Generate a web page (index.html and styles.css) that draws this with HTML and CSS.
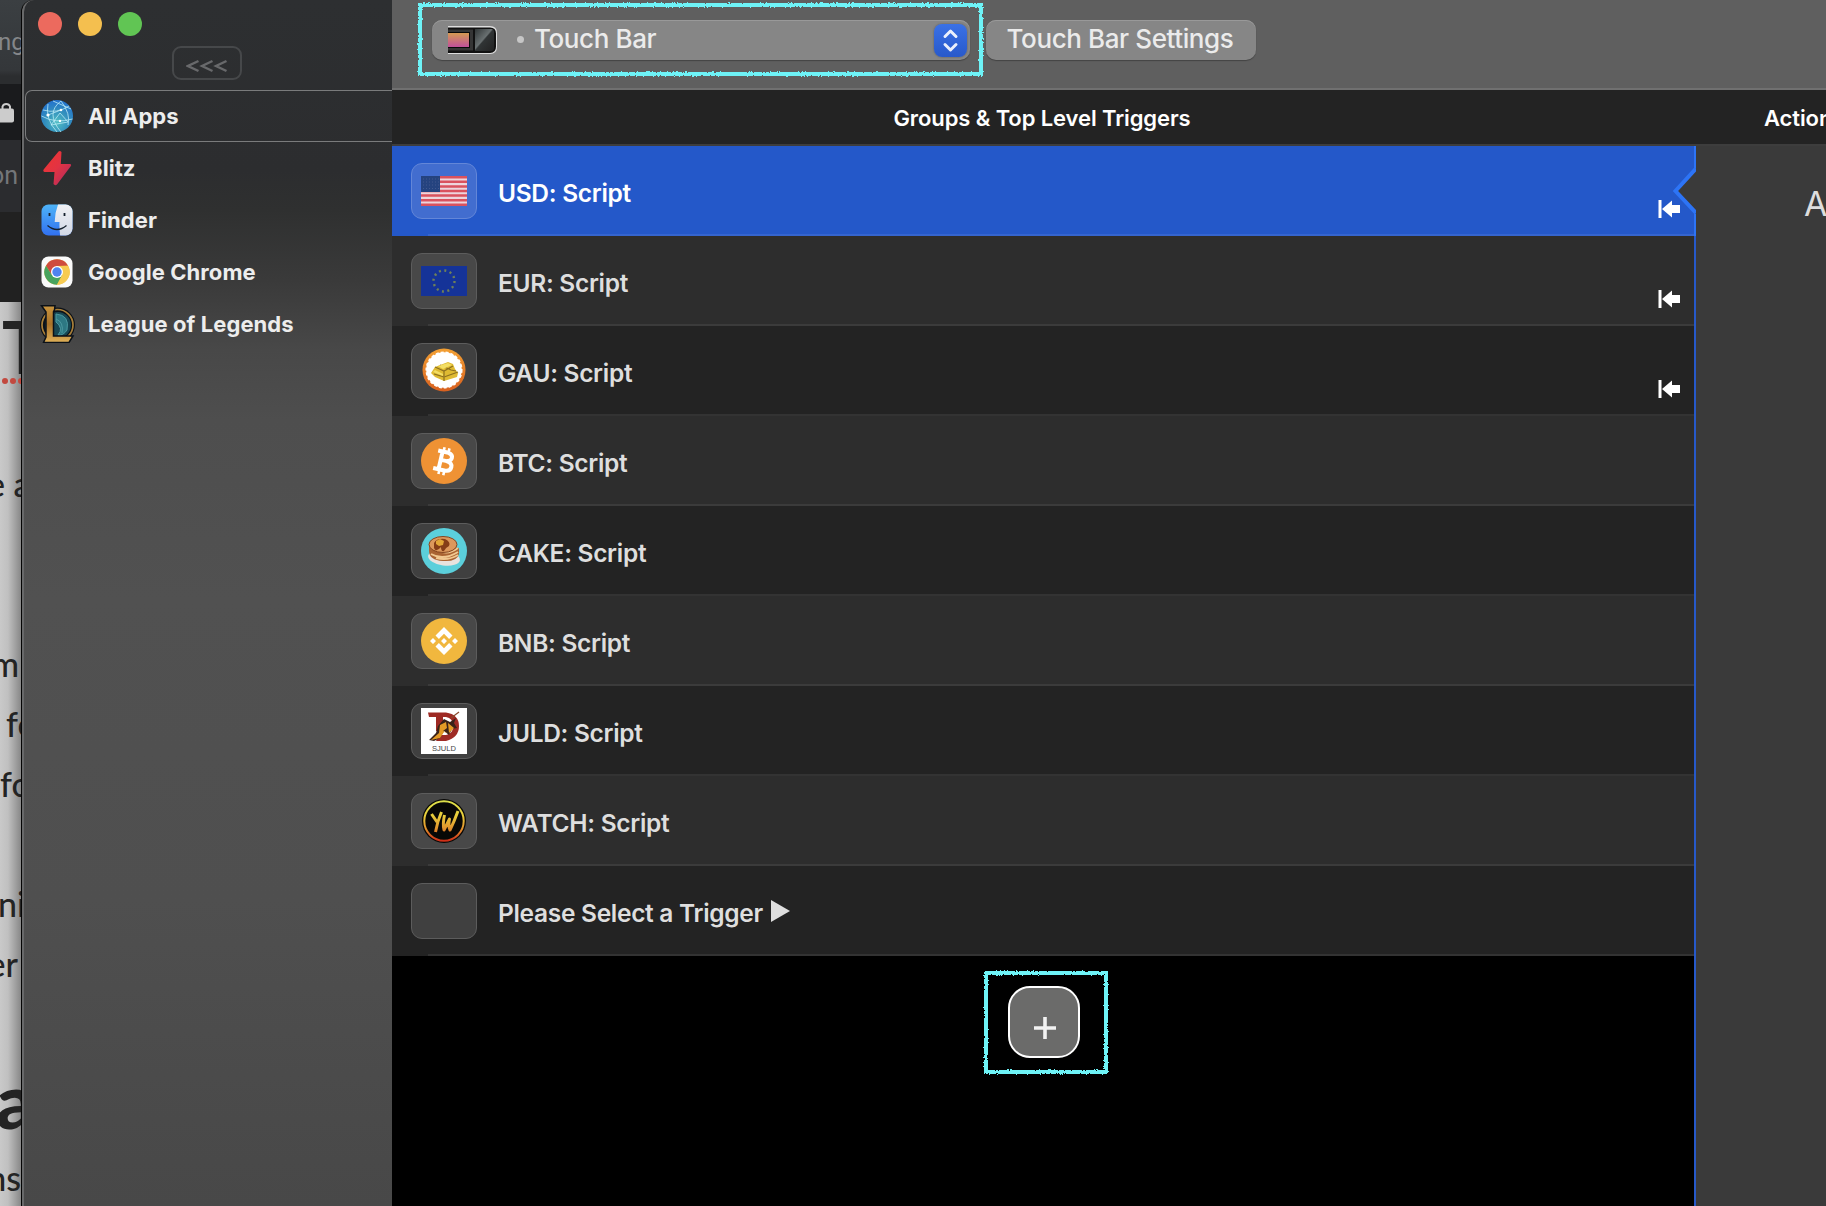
FILE: index.html
```html
<!DOCTYPE html>
<html lang="en">
<head>
<meta charset="utf-8">
<title>Touch Bar triggers</title>
<link rel="stylesheet" href="styles.css">
</head>
<body>
<div class="desktop">
  <div class="browser">
    <div class="tabstrip">ng</div>
    <div class="urlbar"><svg width="16" height="24" viewBox="0 0 16 24"><path d="M2.500 10V6.500a4 4 0 0 1 7.500 0V10" fill="none" stroke="#ccc" stroke-width="2"/><rect x="-3" y="8.500" width="17" height="14" rx="2" fill="#ccc"/></svg></div>
    <div class="bookmarks">on</div>
    <div class="pagedark"></div>
    <div class="page">
      <div class="title">T</div>
      <svg class="dots" width="21" height="8"><g fill="#c2493f"><circle cx="5" cy="4" r="3"/><circle cx="13" cy="4" r="3"/><circle cx="21" cy="4" r="3"/></g></svg>
      <div class="line l1"><span>e a</span></div>
      <div class="line l2 end"><span>m</span></div>
      <div class="line l3"><span>fo</span></div>
      <div class="line l4"><span>fo</span></div>
      <div class="line l5"><span>ni</span></div>
      <div class="line l6 end"><span>er</span></div>
      <div class="title t2">a</div>
      <div class="line l7 end"><span>ns</span></div>
    </div>
  </div>

  <div class="window">
    <aside class="sidebar">
      <div class="lights"><i class="red"></i><i class="yellow"></i><i class="green"></i></div>
      <div class="collapse"><svg width="42" height="14" viewBox="0 0 42 14" fill="none" stroke="#68696b" stroke-width="2.400"><path d="M12.500 2 2 7l10.500 5M26.500 2 16 7l10.500 5M40.500 2 30 7l10.500 5"/></svg></div>
      <ul class="apps">
        <li class="current">
          <svg viewBox="0 0 36 36"><defs><radialGradient id="globe" cx=".5" cy=".7" r=".7"><stop offset="0" stop-color="#52bfc4"/><stop offset=".55" stop-color="#318dbd"/><stop offset="1" stop-color="#2472cf"/></radialGradient></defs><circle cx="18" cy="18" r="16" fill="url(#globe)"/><g fill="none" stroke="#bfeef8" stroke-width=".9" opacity=".85"><path d="M4 12q14 4 26-4M9 6q-3 15 9 28M22 3q-16 12 0 31M22 3q10 13 7 24M2.500 18q14 8 31 3M9 17 22 12M21 15l-9 12 17-3zM14 3l18 8"/></g><circle cx="9" cy="17" r="1.600" fill="#fff"/><circle cx="22" cy="12" r="1.300" fill="#fff"/><circle cx="21" cy="23" r="1.200" fill="#fff"/></svg>
          <span>All Apps</span></li>
        <li>
          <svg viewBox="0 0 36 36"><defs><linearGradient id="bolt" x1="0" y1="0" x2="1" y2="1"><stop offset="0" stop-color="#f0352f"/><stop offset=".5" stop-color="#e23343"/><stop offset="1" stop-color="#a92a63"/></linearGradient></defs><path d="M19.500 1.500q1.500-1 3 .5l-.7 12H31q2 .5.500 2.500L18 34.500q-2 1.500-3.500-.5L15.500 22H5.500q-2-.8-.7-2.700z" fill="url(#bolt)"/></svg>
          <span>Blitz</span></li>
        <li>
          <svg viewBox="0 0 36 36"><defs><linearGradient id="fb" x1="0" y1="0" x2="0" y2="1"><stop offset="0" stop-color="#50b9f8"/><stop offset="1" stop-color="#2f6bf0"/></linearGradient><linearGradient id="fw" x1="0" y1="0" x2="0" y2="1"><stop offset="0" stop-color="#f3f3f5"/><stop offset="1" stop-color="#cfd6e4"/></linearGradient><clipPath id="fc"><rect x="2.500" y="2.500" width="31" height="31" rx="7"/></clipPath></defs><g clip-path="url(#fc)"><path d="M0 0h36v36H0z" fill="url(#fb)"/><path d="M20 0q-4 9-4.300 20h4.800q-.3 8 1 16H36V0z" fill="url(#fw)"/></g><path d="M10.500 11v3M25.500 11v3" stroke="#15202c" stroke-width="1.800"/><path d="M8.500 23.500q9.500 8 19 0" fill="none" stroke="#15202c" stroke-width="1.300"/></svg>
          <span>Finder</span></li>
        <li>
          <svg viewBox="0 0 36 36"><rect x="2.500" y="2.500" width="31" height="31" rx="7" fill="#fafafa"/><g transform="translate(18 18)"><circle r="12.700" fill="#e9ba42"/><path d="M-11-6.350A12.700 12.700 0 0 1 11-6.350L0-6-5.200 3z" fill="#cf4b3e"/><path d="M-11-6.350A12.700 12.700 0 0 0 0 12.700L5.200 3-5.200 3z" fill="#47a35d"/><path d="M11-6.350A12.700 12.700 0 0 1 0 12.700L5.200 3 0-6z" fill="#f7cb52"/><circle r="6" fill="#fff"/><circle r="4.700" fill="#4f83ee"/></g></svg>
          <span>Google Chrome</span></li>
        <li>
          <svg class="lol" viewBox="0 0 36 38"><defs><linearGradient id="gold" x1="0" y1="0" x2="0" y2="1"><stop offset="0" stop-color="#c9953e"/><stop offset=".5" stop-color="#a87229"/><stop offset="1" stop-color="#dfb058"/></linearGradient></defs><circle cx="18.500" cy="20" r="17.500" fill="#0b1118"/><circle cx="18.500" cy="20" r="15.500" fill="none" stroke="#a87f39" stroke-width="1.700"/><circle cx="19" cy="20" r="13" fill="#174753"/><path d="M17 9q14 1 11 16-4 6-9 5 6-7-2-13zM17 14q8 3 6 14" fill="#2d7883" stroke="#4b98a0" stroke-width="1"/><path d="M2.500.8H16l-.5 4-1 2V31H34l-4 6.500H4.500L7 32V7Z" fill="url(#gold)" stroke="#0b1118" stroke-width="1.500"/></svg>
          <span>League of Legends</span></li>
      </ul>
    </aside>

    <main class="main">
      <div class="toolbar">
        <div class="select">
          <svg class="tb" width="50" height="32" viewBox="0 0 50 32"><defs><linearGradient id="sun" x1="0" y1="0" x2="0" y2="1"><stop offset="0" stop-color="#d59a52"/><stop offset="1" stop-color="#c1509a"/></linearGradient><linearGradient id="glass" x1="0" y1="0" x2="1" y2="1"><stop offset="0" stop-color="#303536"/><stop offset=".45" stop-color="#697071"/><stop offset=".5" stop-color="#303435"/><stop offset="1" stop-color="#222"/></linearGradient></defs><path d="M0 2h42q7 0 7 7v14q0 7-7 7H0z" fill="#dedede"/><path d="M0 3.500h42q6 0 6 6v13q0 6.500-6 6.500H0z" fill="#111"/><path d="M0 5.500h25v21H0z" fill="#353535"/><path d="M0 8h22v16H0z" fill="#090909"/><path d="M0 9h21v14H0z" fill="url(#sun)"/><path d="M27 5h16q3 0 3 3v16q0 3-3 3H27z" fill="url(#glass)"/></svg>
          <span class="bullet"></span>
          <span class="label">Touch Bar</span>
          <span class="stepper"><svg width="33" height="33" viewBox="0 0 33 33" fill="none" stroke="#fff" stroke-opacity=".9" stroke-width="3" stroke-linecap="round" stroke-linejoin="round"><path d="m11 12.500 5.500-5.500 5.500 5.500M11 20.500l5.500 5.500 5.500-5.500"/></svg></span>
        </div>
        <div class="button">Touch Bar Settings</div>
      </div>
      <div class="heads"><div class="head-groups"><span>Groups &amp; Top Level Triggers</span></div><div class="head-actions">Actions</div></div>
      <div class="content">
        <div class="triggers">
          <div class="row selected"><div class="thumb"><svg viewBox="0 0 46 46"><path d="M0 8h46v30H0z" fill="#edd5dc"/><path d="M0 9.200h46M0 13.800h46M0 18.400h46M0 23h46M0 27.600h46M0 32.200h46M0 36.800h46" stroke="#d9525e" stroke-width="2.500"/><path d="M0 8h19v16H0z" fill="#25437f"/><path d="M2 11h16M2 14h16M2 17h16M2 20.500h16" stroke="#42598f" stroke-width="1" stroke-dasharray="1 2"/></svg></div><span class="name">USD: Script</span><svg class="back" viewBox="0 0 22 18"><path d="M.5 0h3v18h-3zM4 9 14 .5V5h8v8h-8v4.500z" fill="#fff"/></svg></div>
          <div class="row"><div class="thumb"><svg viewBox="0 0 46 46"><path d="M0 8h46v30H0z" fill="#153398"/><circle cx="23" cy="23" r="10.500" fill="none" stroke="#6f8058" stroke-width="2.400" stroke-dasharray="2 3.500"/></svg></div><span class="name">EUR: Script</span><svg class="back" viewBox="0 0 22 18"><path d="M.5 0h3v18h-3zM4 9 14 .5V5h8v8h-8v4.500z" fill="#fff"/></svg></div>
          <div class="row"><div class="thumb"><svg viewBox="0 0 46 46"><defs><linearGradient id="ring" x1="0" y1="0" x2="0" y2="1"><stop offset="0" stop-color="#f3a033"/><stop offset="1" stop-color="#d8601f"/></linearGradient></defs><circle cx="23" cy="22" r="21.500" fill="url(#ring)"/><circle cx="23" cy="22" r="17.800" fill="#fff" stroke="#fff" stroke-width="1.500" stroke-dasharray="3 2"/><path d="m10 25 4-6 13-5 5 2 2 5 3 4-1 4-13 4-9-4z" fill="#dfba32"/><path d="m14 19 9 4 9-5M19 17l11 5 5 1M13 26l10 3v4M23 29l14-5M23 23v5" stroke="#8d701f" fill="none" stroke-width="1.200"/><path d="m17 18 10-3 4 2-9 4zM14 22l8 4v2l-10-4z" fill="#f3de65"/></svg></div><span class="name">GAU: Script</span><svg class="back" viewBox="0 0 22 18"><path d="M.5 0h3v18h-3zM4 9 14 .5V5h8v8h-8v4.500z" fill="#fff"/></svg></div>
          <div class="row"><div class="thumb"><svg viewBox="0 0 46 46"><circle cx="23" cy="23" r="23" fill="#ef9234"/><g transform="rotate(13 23 23)" fill="none" stroke="#fff"><path d="M15 14h10.500q4.500.5 4.500 4.200t-4.500 4.300H19M25.500 22.500q6 .5 6 4.700 0 5-6 5H14M19.500 14v18" stroke-width="4"/><path d="M20.500 9.500V14M25.500 9.500V14M20.500 32v5M25.500 32v5" stroke-width="2.600"/></g></svg></div><span class="name">BTC: Script</span></div>
          <div class="row"><div class="thumb"><svg viewBox="0 0 46 46"><circle cx="23" cy="23" r="23" fill="#5bcfdb"/><ellipse cx="23" cy="30" rx="16" ry="7.500" fill="#e8e2de" transform="rotate(8 23 30)"/><path d="M8 23q0 9 14 10t16-7v-6l-30-4z" fill="#a96332"/><path d="M10 26q12 7 27-2M15 30q12 3 22-3M17 22q9 6 20-2" fill="none" stroke="#f1c891" stroke-width="2"/><ellipse cx="22" cy="16.500" rx="14" ry="8" fill="#dc985c" stroke="#85451f" stroke-width="1"/><path d="M13 15q3-5 11-4 6 3 4 7-4 2-5 5-3 1-3-4-5 6-7 1z" fill="#853d17"/><path d="m15 13 4-2 4 2-1 4-4 1-3-2z" fill="#e2a638"/></svg></div><span class="name">CAKE: Script</span></div>
          <div class="row"><div class="thumb"><svg viewBox="0 0 46 46"><circle cx="23" cy="23" r="23" fill="#f1b73e"/><path d="m23 9 8.500 8.500-3.400 3.400-5.100-5.100-5.100 5.100-3.400-3.400zM23 37l8.500-8.500-3.400-3.400-5.100 5.100-5.100-5.100-3.400 3.400zM12 20l3 3-3 3-3-3zM34 20l3 3-3 3-3-3zM23 20l3 3-3 3-3-3z" fill="#fff"/></svg></div><span class="name">BNB: Script</span></div>
          <div class="row"><div class="thumb"><svg viewBox="0 0 46 46"><path d="M0 0h46v46H0z" fill="#fff"/><path d="M7 4.500h18q13 2 13 13.500T25 33H15l3-6h7q7-1 7-9t-7-9h-3v14h-7V9H8z" fill="#9e2a24"/><path d="m30 10 8-6" stroke="#8a4a2c" stroke-width="1.200"/><path d="M8 32l7-7 2-7 6-7 6 3 6-4-2 5 3 5-5 1-3 6-5-4-4 7-6 3z" fill="#3a2219"/><path d="m10 32 8-7 1-8 6-3 1 6-4 3 5 2-4-1-4 6zM27 15l6 5-5 5z" fill="#e39a26"/><text x="23" y="42.500" text-anchor="middle" class="juld" textLength="24" lengthAdjust="spacingAndGlyphs">SJULD</text></svg></div><span class="name">JULD: Script</span></div>
          <div class="row"><div class="thumb"><svg viewBox="0 0 46 46"><defs><linearGradient id="yw" gradientUnits="userSpaceOnUse" x1="0" y1="3" x2="0" y2="43"><stop offset="0" stop-color="#dde04a"/><stop offset=".35" stop-color="#e8cf3c"/><stop offset=".7" stop-color="#e0902c"/><stop offset="1" stop-color="#cf2c17"/></linearGradient></defs><circle cx="23" cy="23" r="22" fill="#080806"/><circle cx="23" cy="23" r="19.700" fill="none" stroke="url(#yw)" stroke-width="2"/><path d="m10.500 16 5.500 8M20.500 14q-4 9-6 20M23.500 17q-2 9-.5 15l5.500-11q-1.500 7 .5 11 4-8 8-19" fill="none" stroke="url(#yw)" stroke-width="3" stroke-linejoin="round"/></svg></div><span class="name">WATCH: Script</span></div>
          <div class="row"><div class="thumb"></div><span class="name">Please Select a Trigger</span><svg class="play" viewBox="0 0 19 22"><path d="m0 0 19 11L0 22z" fill="#dedede"/></svg></div>
          <div class="empty"><button class="add"><svg width="30" height="30" viewBox="0 0 30 30"><path d="M15 4v22M4 15h22" stroke="#f2f2f2" stroke-width="3.600"/></svg></button></div>
          <svg class="notch" viewBox="0 0 24 50"><path d="M24 2 3 25l21 23z" fill="#3a3a3a"/><path d="M24 2.500 3.500 25 24 47" fill="none" stroke="#2d74f6" stroke-width="4"/></svg>
        </div>
        <div class="actions">A</div>
      </div>
    </main>
  </div>

  <svg class="marks" width="1826" height="1206"><defs><filter id="rough" filterUnits="userSpaceOnUse" x="400" y="0" width="750" height="1100"><feTurbulence type="fractalNoise" baseFrequency=".55" numOctaves="2" seed="4"/><feDisplacementMap in="SourceGraphic" scale="3" xChannelSelector="R" yChannelSelector="G"/></filter></defs><g fill="none" stroke="#6ef3f7" stroke-width="4" filter="url(#rough)"><rect x="420" y="5" width="561" height="69"/><rect x="986" y="973" width="120" height="99"/></g></svg>
</div>
</body>
</html>
```
FILE: styles.css
```css
* { box-sizing: border-box; }
body { margin: 0; background: #000; font-family: Inter, "Liberation Sans", sans-serif; }
.desktop { position: relative; display: flex; width: 1826px; height: 1206px; overflow: hidden; }

/* browser window that shows behind the left edge */
.browser { width: 31px; margin-right: -10px; flex: none; height: 1206px; overflow: hidden; white-space: nowrap; background: #111; }
.tabstrip { height: 84px; background: linear-gradient(#3b3f42, #34373a 70px, #2b2d2f 76px); color: #85878a; font: 24px/84px Roboto, sans-serif; text-indent: -2px; }
.urlbar { height: 56px; background: #1a1b1d; padding-top: 16px; }
.bookmarks { height: 72px; background: #2b2c2f; color: #747679; font: 25px/72px Roboto, sans-serif; text-indent: -10px; }
.pagedark { height: 90px; background: #212121; }
.page { height: 904px; display: flex; flex-direction: column; background: linear-gradient(90deg, #c9c9c9, #c0c0c0 8px, #888 21px); color: #242424; padding-top: 4px; }
.title { height: 71px; flex: none; font: 700 72px/80px Lato, sans-serif; padding-left: 2px; }
.dots { display: block; flex: none; }
.line { height: 60px; font: 500 34px/60px Lato, sans-serif; display: flex; white-space: pre; flex: none; }
.end { justify-content: flex-end; }
.l1 { margin-top: 69px; }
.l1 span { margin-left: -13px; }
.l2 { margin-top: 120px; padding-right: 12px; }
.l3 { padding-left: 6px; }
.l4 { padding-left: 0; }
.l5 { margin-top: 60px; }
.l5 span { margin-left: -2px; }
.l6 { padding-right: 13px; }
.t2 { margin-top: 66px; height: 80px; font-weight: 900; font-size: 76px; padding-left: 0; text-indent: -4px; }
.l7 { margin-top: 8px; padding-right: 10px; }

/* app window */
.window { position: relative; flex: none; width: 1805px; height: 1206px; display: flex; overflow: hidden; border-left: 1px solid #050505; border-top-left-radius: 12px; background: #4e4e4e; }
.sidebar { width: 370px; flex: none; border-left: 2px solid #68696a; border-top-left-radius: 12px; background: linear-gradient(#2d2f31, #2c2d2f 170px, #2f3030 210px, #3a3a3a 280px, #484848 350px, #4e4e4e 420px, #515151 600px, #4f4f4f 900px, #484848); }
.lights { display: flex; gap: 16px; padding: 12px 0 0 14px; }
.lights i { width: 24px; height: 24px; border-radius: 50%; }
.red { background: #ec6a5e; }
.yellow { background: #f4bf4f; }
.green { background: #61c554; }
.collapse { margin: 10px 0 0 148px; width: 70px; height: 34px; border: 2px solid #46484a; border-radius: 9px; display: flex; justify-content: center; align-items: center; padding-top: 5px; }
.apps { list-style: none; margin: 10px 0 0 1px; padding: 0; }
.apps li { height: 52px; padding-left: 13px; display: flex; align-items: center; gap: 13px; color: #ededed; font-size: 22px; font-weight: 700; letter-spacing: .08px; white-space: nowrap; border: 1px solid transparent; border-right: 0; }
.apps .current { border-color: #7a7b7c; border-radius: 7px 0 0 7px; }
.apps svg { width: 36px; height: 36px; flex: none; }
.apps .lol { height: 38px; }

.main { width: 1434px; flex: none; display: flex; flex-direction: column; }
.toolbar { height: 90px; flex: none; background: #5f5f5f; border-bottom: 2px solid #707070; padding: 20px 0 0 40px; display: flex; gap: 16px; }
.select, .button { height: 40px; border-radius: 10px; background: #868686; box-shadow: inset 0 1px 0 #999, 0 1px 1px #444; color: #ebebeb; font-size: 26px; font-weight: 500; line-height: 38px; letter-spacing: -.4px; white-space: nowrap; }
.select { width: 538px; display: flex; padding: 0 3px 0 16px; }
.tb { margin-top: 4px; }
.bullet { width: 7px; height: 7px; margin: 16px 0 0 19px; border-radius: 50%; background: #c6c6c6; }
.label { margin-left: 10px; }
.stepper { margin: 4px 0 0 auto; width: 33px; height: 33px; border-radius: 8px; background: linear-gradient(#3a71e6, #2859cb); box-shadow: 0 0 2px #555; line-height: 0; }
.button { width: 270px; padding-right: 2px; text-align: center; }
.heads { height: 56px; flex: none; border-bottom: 2px solid #3d3d3d; background: #232323; display: flex; color: #fff; font-size: 22px; font-weight: 600; line-height: 56px; letter-spacing: -.1px; white-space: nowrap; overflow: hidden; }
.head-groups { width: 1304px; flex: none; display: flex; justify-content: center; padding-right: 4px; }
.head-actions { padding-left: 68px; }

.content { display: flex; flex: 1; min-height: 0; }
.triggers { position: relative; width: 1304px; flex: none; border-right: 2px solid #2659ca; background: #000; display: flex; flex-direction: column; }
.row { height: 90px; flex: none; display: flex; align-items: flex-start; padding: 17px 14px 0 19px; background: linear-gradient(#333, #333) 36px 88px / 100% 2px no-repeat #232323; color: #dedede; }
.row:nth-child(even) { background-color: #2d2d2d; background-image: linear-gradient(#3b3b3b, #3b3b3b); }
.row.selected { background-color: #2458c9; background-image: linear-gradient(#3565cf, #3565cf); color: #fff; margin-right: -2px; padding-right: 16px; box-shadow: inset -2px 0 #2d74f6; }
.thumb { width: 66px; height: 56px; flex: none; border: 1.500px solid #5c5c5c; border-radius: 11px; background: #404040; display: flex; justify-content: center; padding-top: 4px; }
.row:nth-child(even) .thumb { background: #484848; }
.row.selected .thumb { background: #426dcf; border-color: #6386d8; }
.thumb svg { width: 46px; height: 46px; }
.juld { font: 7px "Liberation Sans", sans-serif; fill: #444; }
.name { margin: 13px 0 0 21px; font-size: 24.5px; line-height: 34px; font-weight: 600; letter-spacing: -.3px; white-space: nowrap; }
.back { width: 22px; height: 18px; margin: 37px 0 0 auto; }
.play { width: 19px; height: 22px; margin: 17px 0 0 8px; }
.empty { flex: 1; padding: 30px 0 0 616px; }
.add { display: block; width: 72px; height: 72px; padding: 11px 0 0 2px; border: 2px solid #fff; border-radius: 22px; background: #6b6b6a; }
.add svg { display: block; margin: 0 auto; }
.notch { position: absolute; right: -2px; top: 20px; width: 24px; height: 50px; }
.actions { flex: 1; min-width: 0; overflow: hidden; background: #3a3a3a; color: #ddd; font-size: 34px; line-height: 40px; padding: 38px 0 0 108px; }

.marks { position: absolute; left: 0; top: 0; pointer-events: none; }
```
